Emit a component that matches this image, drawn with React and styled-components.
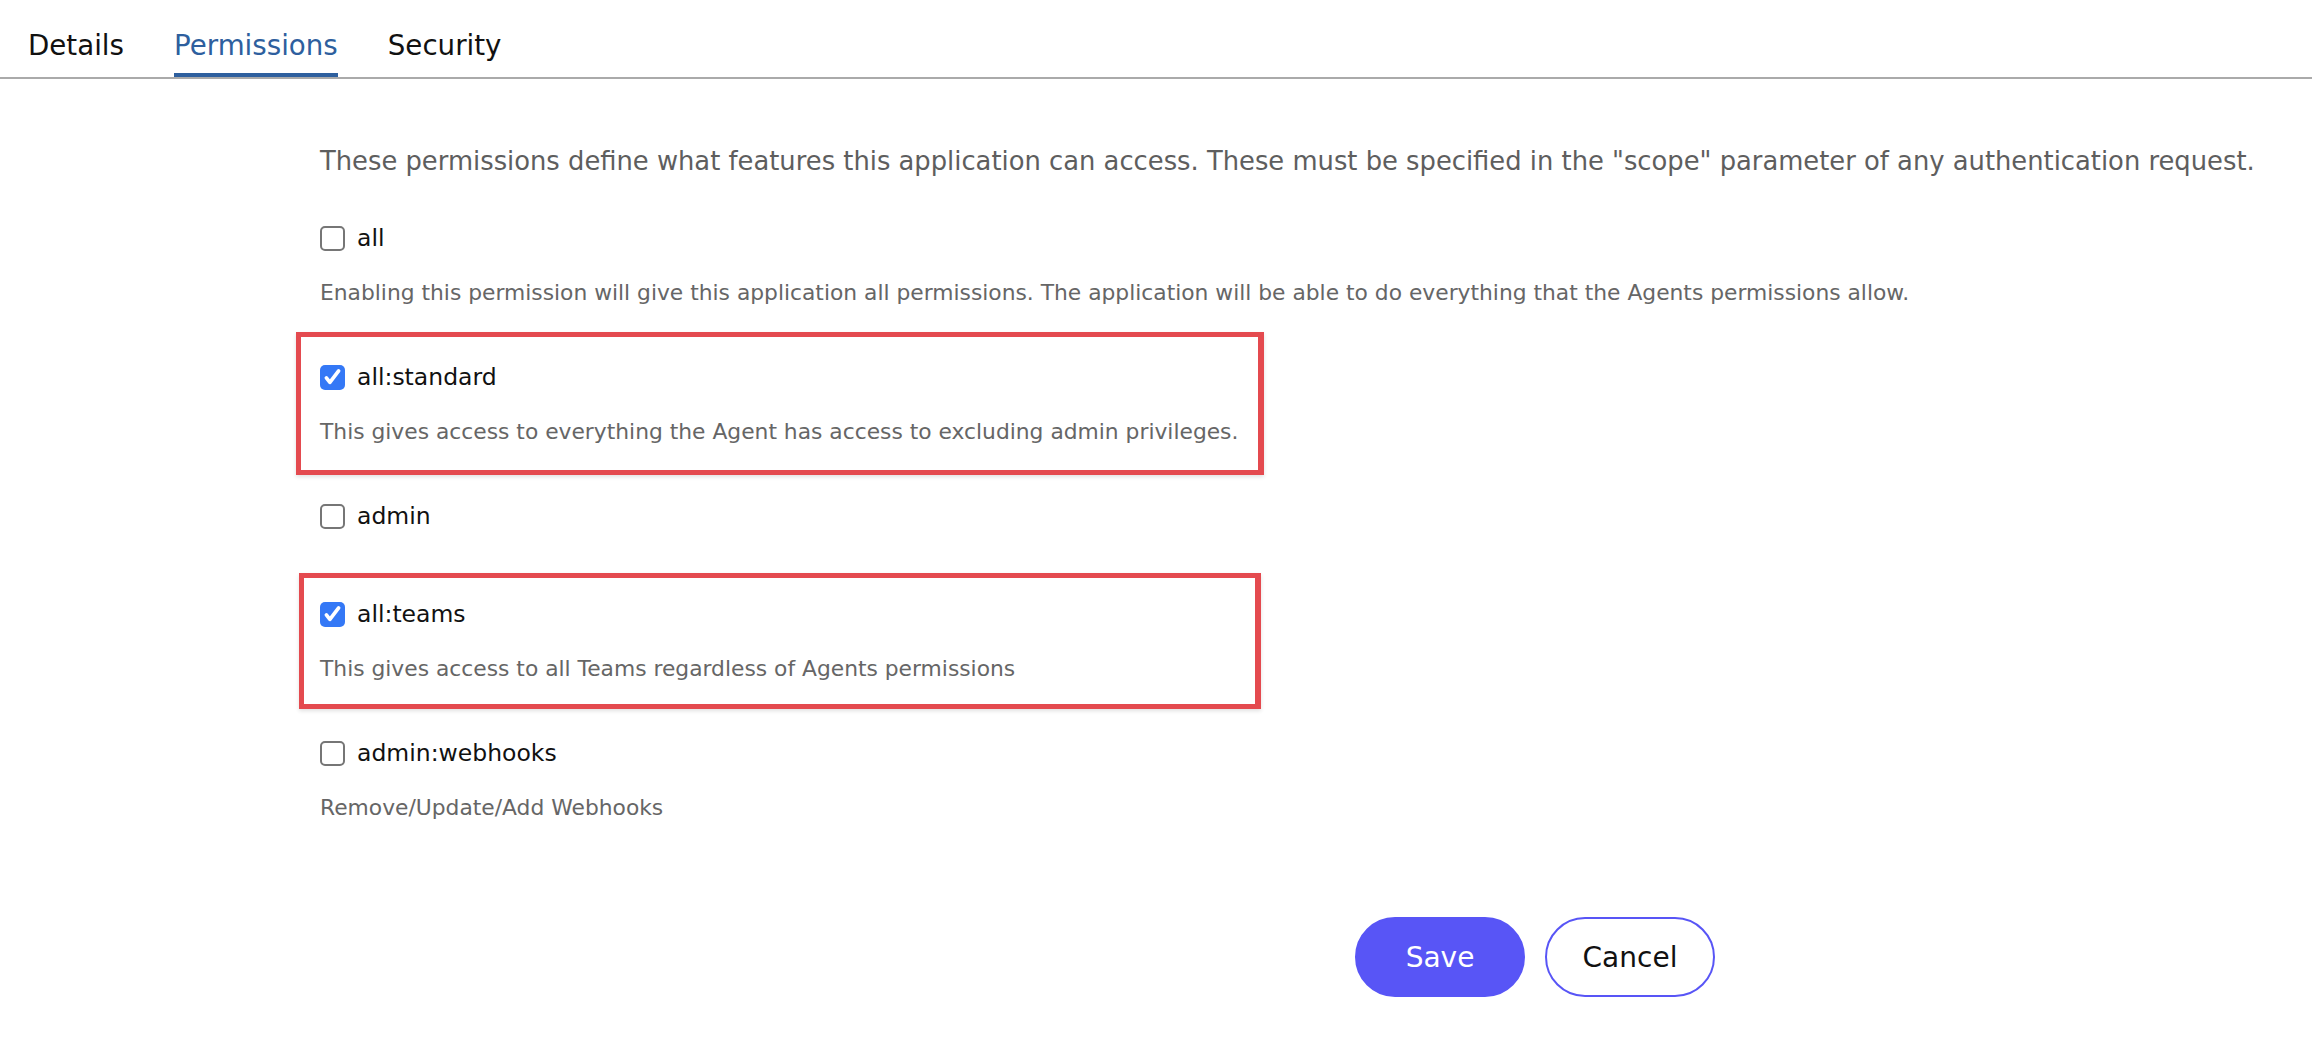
import React from "react";
import styled, { createGlobalStyle } from "styled-components";

const FONT = `"DejaVu Sans", "Noto Sans", sans-serif`;

const GlobalStyle = createGlobalStyle`
  body {
    margin: 0;
    background: #fff;
    font-family: ${FONT};
  }
`;

const Page = styled.div`
  width: 100%;
  min-height: 1038px;
  background: #fff;
`;

const TabBar = styled.div`
  display: flex;
  gap: 50px;
  padding: 26px 0 0 28px;
  border-bottom: 2px solid #aaa;
`;

const Tab = styled.div`
  font-size: 27.7px;
  line-height: 40px;
  padding-bottom: 7px;
  color: ${props => (props.active ? "#2e5f9e" : "#111")};
  border-bottom: 4px solid ${props => (props.active ? "#2e5f9e" : "transparent")};
`;

const Content = styled.div`
  padding: 64px 0 0 320px;
`;

const Intro = styled.p`
  margin: 0 0 46px;
  font-size: 25.8px;
  line-height: 36px;
  color: #5e5e5e;
`;

const List = styled.div`
  display: flex;
  flex-direction: column;
`;

const Item = styled.div`
  position: relative;
  min-height: 42px;
  margin-bottom: 56px;
`;

const Row = styled.div`
  display: flex;
  align-items: center;
  gap: 12px;
  height: 26px;
`;

const Box = styled.span`
  box-sizing: border-box;
  width: 25px;
  height: 25px;
  border-radius: 5px;
  display: flex;
  align-items: center;
  justify-content: center;
  background: ${props => (props.checked ? "#3478f6" : "#fff")};
  border: ${props => (props.checked ? "none" : "2px solid #767676")};
`;

const Label = styled.span`
  font-size: 23.5px;
  color: #111;
`;

const Desc = styled.p`
  margin: 27px 0 0;
  font-size: 21.8px;
  line-height: 30px;
  color: #666;
`;

const Highlight = styled.div`
  position: absolute;
  box-sizing: border-box;
  border: 5px solid #e44a4f;
  border-right-width: 6px;
  box-shadow: 0 2px 4px rgba(0, 0, 0, 0.12);
  pointer-events: none;
`;

const Actions = styled.div`
  display: flex;
  gap: 20px;
  padding: 38px 0 0 1035px;
`;

const Button = styled.button`
  box-sizing: border-box;
  width: 170px;
  height: 80px;
  border-radius: 40px;
  font-family: ${FONT};
  font-size: 28px;
  cursor: pointer;
  background: ${props => (props.primary ? "#5855f6" : "#fff")};
  color: ${props => (props.primary ? "#fff" : "#111")};
  border: 2px solid #5855f6;
`;

const Check = () => (
  <svg width="21" height="21" viewBox="0 0 24 24" fill="none">
    <path d="M5 12.5l4 5L19 4.5" stroke="#fff" strokeWidth="4.2" strokeLinecap="round" strokeLinejoin="round" />
  </svg>
);

const permissions = [
  {
    name: "all",
    desc: "Enabling this permission will give this application all permissions. The application will be able to do everything that the Agents permissions allow.",
  },
  {
    name: "all:standard",
    checked: true,
    desc: "This gives access to everything the Agent has access to excluding admin privileges.",
    box: { left: -24, top: -32, width: 968, height: 143 },
  },
  { name: "admin" },
  {
    name: "all:teams",
    checked: true,
    desc: "This gives access to all Teams regardless of Agents permissions",
    box: { left: -21, top: -28, width: 962, height: 136 },
  },
  { name: "admin:webhooks", desc: "Remove/Update/Add Webhooks" },
];

export default function App() {
  return (
    <Page>
      <GlobalStyle />
      <TabBar>
        <Tab>Details</Tab>
        <Tab active>Permissions</Tab>
        <Tab>Security</Tab>
      </TabBar>
      <Content>
        <Intro>
          These permissions define what features this application can access. These must be specified in the "scope" parameter of any authentication request.
        </Intro>
        <List>
          {permissions.map(p => (
            <Item key={p.name}>
              <Row>
                <Box checked={p.checked}>{p.checked && <Check />}</Box>
                <Label>{p.name}</Label>
              </Row>
              {p.desc && <Desc>{p.desc}</Desc>}
              {p.box && <Highlight style={p.box} />}
            </Item>
          ))}
        </List>
        <Actions>
          <Button primary>Save</Button>
          <Button>Cancel</Button>
        </Actions>
      </Content>
    </Page>
  );
}
